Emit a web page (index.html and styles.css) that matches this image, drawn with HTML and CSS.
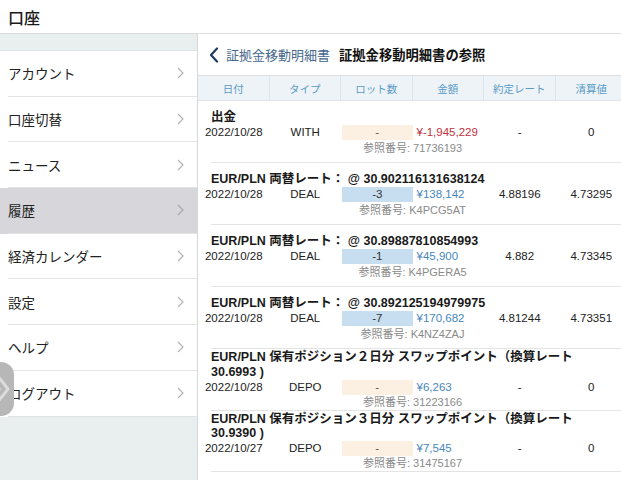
FILE: index.html
```html
<!DOCTYPE html>
<html lang="ja">
<head>
<meta charset="utf-8">
<link rel="stylesheet" href="styles.css">
</head>
<body>
<div class="app">
  <header class="topbar"><h1 class="title">口座</h1></header>
  <div class="main">
    <aside class="sidebar">
      <div class="side-gap"></div>
      <ul class="menu">
        <li class="item"><div class="item-in"><span>アカウント</span><svg class="chev" width="7" height="12" viewBox="0 0 7 12"><path d="M1 1l5 5-5 5" fill="none" stroke="#b4b4b4" stroke-width="1.2"/></svg></div></li>
        <li class="item"><div class="item-in"><span>口座切替</span><svg class="chev" width="7" height="12" viewBox="0 0 7 12"><path d="M1 1l5 5-5 5" fill="none" stroke="#b4b4b4" stroke-width="1.2"/></svg></div></li>
        <li class="item"><div class="item-in"><span>ニュース</span><svg class="chev" width="7" height="12" viewBox="0 0 7 12"><path d="M1 1l5 5-5 5" fill="none" stroke="#b4b4b4" stroke-width="1.2"/></svg></div></li>
        <li class="item selected"><div class="item-in"><span>履歴</span><svg class="chev" width="7" height="12" viewBox="0 0 7 12"><path d="M1 1l5 5-5 5" fill="none" stroke="#a8a8ae" stroke-width="1.2"/></svg></div></li>
        <li class="item"><div class="item-in"><span>経済カレンダー</span><svg class="chev" width="7" height="12" viewBox="0 0 7 12"><path d="M1 1l5 5-5 5" fill="none" stroke="#b4b4b4" stroke-width="1.2"/></svg></div></li>
        <li class="item"><div class="item-in"><span>設定</span><svg class="chev" width="7" height="12" viewBox="0 0 7 12"><path d="M1 1l5 5-5 5" fill="none" stroke="#b4b4b4" stroke-width="1.2"/></svg></div></li>
        <li class="item"><div class="item-in"><span>ヘルプ</span><svg class="chev" width="7" height="12" viewBox="0 0 7 12"><path d="M1 1l5 5-5 5" fill="none" stroke="#b4b4b4" stroke-width="1.2"/></svg></div></li>
        <li class="item"><div class="item-in"><span>ログアウト</span><svg class="chev" width="7" height="12" viewBox="0 0 7 12"><path d="M1 1l5 5-5 5" fill="none" stroke="#b4b4b4" stroke-width="1.2"/></svg></div></li>
      </ul>
    </aside>
    <section class="detail">
      <div class="detail-head">
        <svg class="back" width="10" height="16" viewBox="0 0 10 16"><path d="M8 1.5L2 8l6 6.5" fill="none" stroke="#1e3a5c" stroke-width="2.2" stroke-linecap="round" stroke-linejoin="round"/></svg>
        <span class="back-label">証拠金移動明細書</span>
        <span class="head-title">証拠金移動明細書の参照</span>
      </div>
      <div class="table">
        <div class="thead">
          <div class="th">日付</div>
          <div class="th">タイプ</div>
          <div class="th">ロット数</div>
          <div class="th">金額</div>
          <div class="th">約定レート</div>
          <div class="th">清算値</div>
        </div>

        <div class="row">
          <div class="row-title">出金</div>
          <div class="cells">
            <div class="td">2022/10/28</div>
            <div class="td">WITH</div>
            <div class="td lot beige">-</div>
            <div class="td amt red">¥-1,945,229</div>
            <div class="td">-</div>
            <div class="td">0</div>
          </div>
          <div class="ref">参照番号: 71736193</div>
        </div>

        <div class="row">
          <div class="row-title">EUR/PLN 両替レート： @ 30.902116131638124</div>
          <div class="cells">
            <div class="td">2022/10/28</div>
            <div class="td">DEAL</div>
            <div class="td lot blue">-3</div>
            <div class="td amt bl">¥138,142</div>
            <div class="td">4.88196</div>
            <div class="td">4.73295</div>
          </div>
          <div class="ref">参照番号: K4PCG5AT</div>
        </div>

        <div class="row">
          <div class="row-title">EUR/PLN 両替レート： @ 30.89887810854993</div>
          <div class="cells">
            <div class="td">2022/10/28</div>
            <div class="td">DEAL</div>
            <div class="td lot blue">-1</div>
            <div class="td amt bl">¥45,900</div>
            <div class="td">4.882</div>
            <div class="td">4.73345</div>
          </div>
          <div class="ref">参照番号: K4PGERA5</div>
        </div>

        <div class="row">
          <div class="row-title">EUR/PLN 両替レート： @ 30.892125194979975</div>
          <div class="cells">
            <div class="td">2022/10/28</div>
            <div class="td">DEAL</div>
            <div class="td lot blue">-7</div>
            <div class="td amt bl">¥170,682</div>
            <div class="td">4.81244</div>
            <div class="td">4.73351</div>
          </div>
          <div class="ref">参照番号: K4NZ4ZAJ</div>
        </div>

        <div class="row multi">
          <div class="row-title">EUR/PLN 保有ポジション２日分 スワップポイント（換算レート<br>30.6993 )</div>
          <div class="cells">
            <div class="td">2022/10/28</div>
            <div class="td">DEPO</div>
            <div class="td lot beige">-</div>
            <div class="td amt bl">¥6,263</div>
            <div class="td">-</div>
            <div class="td">0</div>
          </div>
          <div class="ref">参照番号: 31223166</div>
        </div>

        <div class="row multi">
          <div class="row-title">EUR/PLN 保有ポジション３日分 スワップポイント（換算レート<br>30.9390 )</div>
          <div class="cells">
            <div class="td">2022/10/27</div>
            <div class="td">DEPO</div>
            <div class="td lot beige">-</div>
            <div class="td amt bl">¥7,545</div>
            <div class="td">-</div>
            <div class="td">0</div>
          </div>
          <div class="ref">参照番号: 31475167</div>
        </div>
      </div>
    </section>
  </div>
  <div class="assist">
    <svg width="46" height="54" viewBox="0 0 46 54"><path d="M29 13l11 14-11 14" fill="none" stroke="#dcdcdc" stroke-width="3" stroke-linejoin="round"/><path d="M25 18l8 9-8 9" fill="none" stroke="#cacaca" stroke-width="1.5"/></svg>
  </div>
</div>
</body>
</html>
```

FILE: styles.css
```css
* { box-sizing: border-box; }
html, body { margin: 0; padding: 0; }
body {
  width: 621px;
  height: 480px;
  overflow: hidden;
  background: #ffffff;
  font-family: "Liberation Sans", "Noto Sans CJK JP", sans-serif;
  color: #1e1e1e;
}
.app { position: relative; width: 621px; height: 480px; overflow: hidden; }

.topbar {
  height: 34px;
  border-bottom: 1px solid #dcdcdc;
  display: flex;
  align-items: center;
  padding-left: 8px;
  background: #fff;
}
.title {
  margin: 0;
  font-family: "Noto Sans CJK JP", sans-serif;
  font-size: 16px;
  font-weight: 500;
  color: #1a1a1a;
}

.main { display: flex; height: 446px; }

.sidebar {
  width: 198px;
  flex: none;
  background: #e9efee;
  border-right: 1px solid #d6d9d9;
}
.side-gap { height: 17px; border-bottom: 1px solid #dfe3e3; }
.menu { list-style: none; margin: 0; padding: 0; }
.item { background: #fff; padding-left: 8px; }
.item.selected { background: #d6d6db; }
.item-in {
  height: 45.7px;
  border-bottom: 1px solid #e4e4e4;
  display: flex;
  align-items: center;
  justify-content: space-between;
  padding-right: 13px;
  font-family: "Noto Sans CJK JP", sans-serif;
  font-size: 13.5px;
  color: #222;
}
.item:last-child .item-in { border-bottom-color: #dfe3e3; }
.chev { display: block; }

.detail { flex: 1; background: #fff; overflow: hidden; }
.detail-head {
  height: 42px;
  border-bottom: 1px solid #dedede;
  display: flex;
  align-items: center;
  padding-left: 11px;
  font-family: "Noto Sans CJK JP", sans-serif;
  font-size: 13px;
}
.back { display: block; margin-right: 7px; }
.back-label { color: #46688c; margin-right: 9px; }
.head-title { color: #111; font-weight: 700; font-size: 13.3px; }

.table { width: 429px; }
.thead {
  display: grid;
  grid-template-columns: repeat(6, 71.5px);
  height: 25px;
  background: #eef3f8;
  border-bottom: 1px solid #dfe5ea;
}
.th {
  display: flex;
  align-items: center;
  justify-content: center;
  border-right: 1px solid #dde5ec;
  font-family: "Noto Sans CJK JP", sans-serif;
  font-size: 10.5px;
  color: #5a9bc6;
}
.th:last-child { border-right: none; }

.row {
  margin-left: 13px;
  min-height: 62px;
  border-bottom: 1px solid #e4e4e4;
  display: flex;
  flex-direction: column;
  justify-content: center;
  padding: 3px 0 0;
}
.row.multi { min-height: 61px; padding: 1px 0 0; }
.row-title {
  font-size: 12.5px;
  font-weight: 700;
  line-height: 14.5px;
  color: #1a1a1a;
}
.cells {
  margin-left: -13px;
  display: grid;
  grid-template-columns: repeat(6, 71.5px);
  height: 15px;
  margin-top: 0.5px;
}
.td {
  font-size: 11.5px;
  line-height: 15px;
  text-align: center;
  color: #222;
}
.lot { margin-left: 1px; }
.beige { background: #fcf0e3; color: #555; }
.blue { background: #c7ddf0; color: #333; }
.amt { text-align: left; padding-left: 4px; }
.red { color: #c0303c; }
.bl { color: #4887bd; }
.ref {
  margin-left: -13px;
  text-align: center;
  font-size: 11px;
  line-height: 16px;
  color: #8a8a8a;
}
.row.multi .ref { line-height: 15px; }

.assist {
  position: absolute;
  left: -32px;
  top: 362px;
  width: 46px;
  height: 54px;
  border-radius: 13px;
  background: #b7b7b7;
}
.assist svg { display: block; }
```
